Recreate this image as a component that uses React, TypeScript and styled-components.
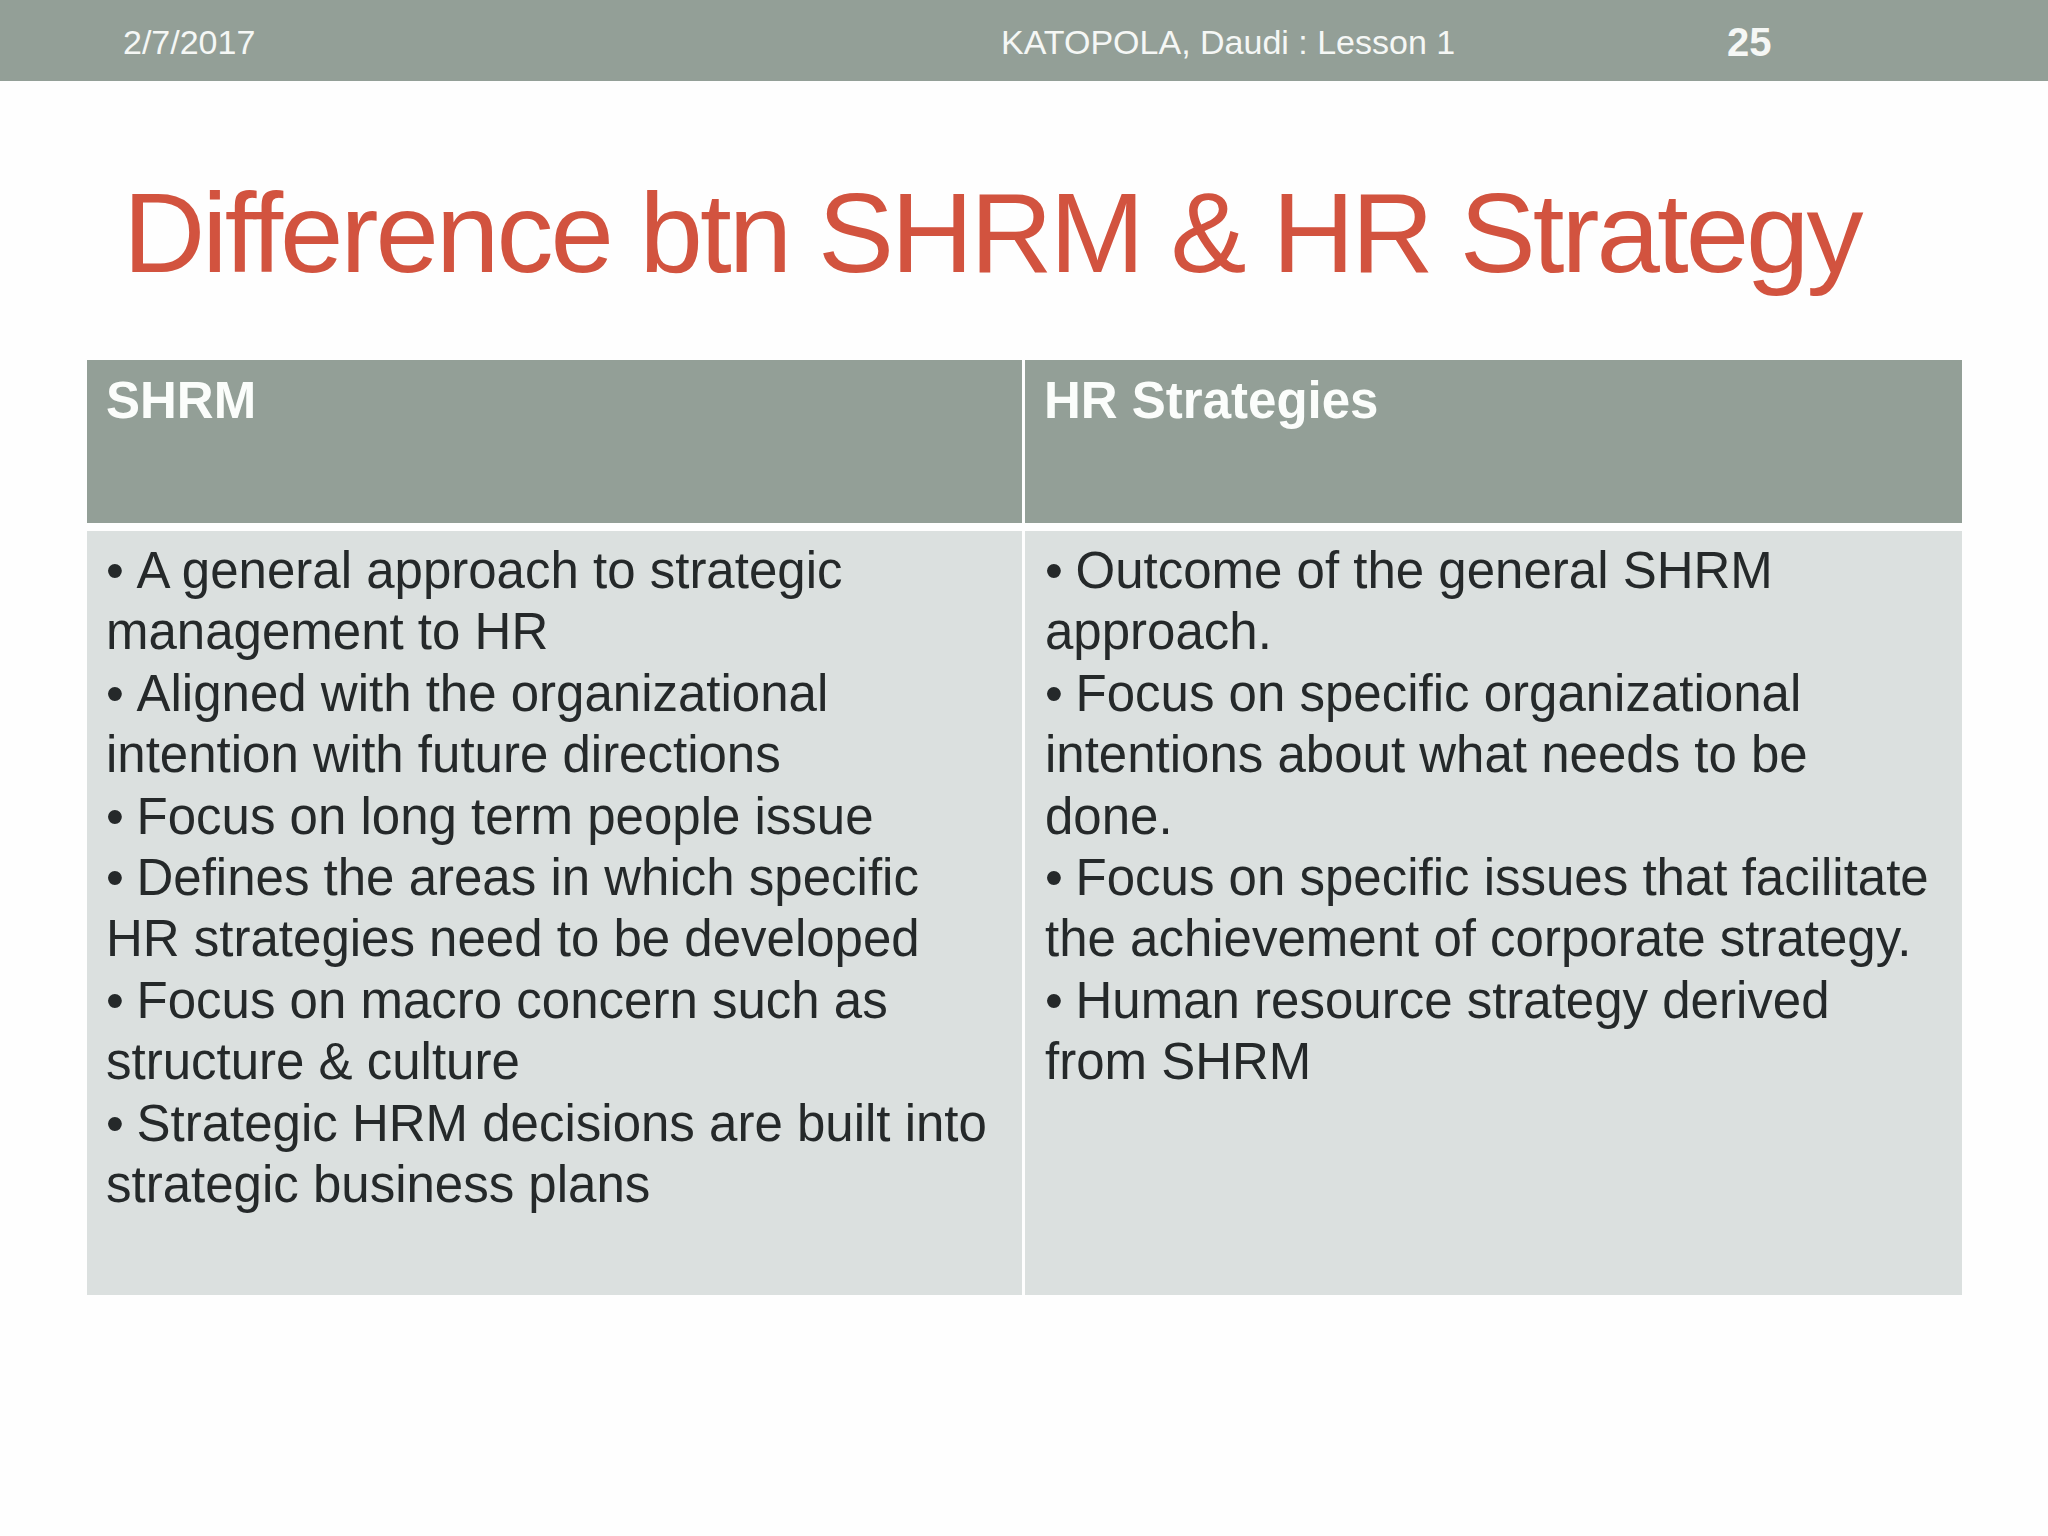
import React from "react";
import styled, { createGlobalStyle } from "styled-components";

const GlobalStyle = createGlobalStyle`
  html, body {
    margin: 0;
    padding: 0;
    background: #fefefe;
  }
  body {
    font-family: "Liberation Sans", Arial, Helvetica, sans-serif;
  }
`;

const Slide = styled.div`
  width: 2048px;
  height: 1536px;
  background: #fefefe;
  display: flex;
  flex-direction: column;
  overflow: hidden;
`;

const TopBar = styled.header`
  height: 81px;
  flex: 0 0 81px;
  background: #939f97;
  display: flex;
  align-items: flex-start;
  padding-left: 123px;
  box-sizing: border-box;
`;

const BarItem = styled.span<{ $w?: number; $top: number; $size: number; $bold?: boolean }>`
  ${(p) => (p.$w ? `width: ${p.$w}px; flex: 0 0 ${p.$w}px;` : "")}
  padding-top: ${(p) => p.$top}px;
  font-size: ${(p) => p.$size}px;
  line-height: 1;
  font-weight: ${(p) => (p.$bold ? 700 : 400)};
  color: #f5f7f5;
  white-space: nowrap;
`;

const Title = styled.h1`
  margin: 95px 0 0 123px;
  font-size: 114px;
  line-height: 114px;
  font-weight: 400;
  letter-spacing: -2.96px;
  color: #d2533f;
  white-space: nowrap;
`;

const Table = styled.div`
  margin: 70px 0 0 87px;
  display: grid;
  grid-template-columns: 935px 937px;
  grid-template-rows: 163px 764px;
  column-gap: 3px;
  row-gap: 8px;
`;

const HeaderCell = styled.div`
  background: #939f97;
  padding: 10px 19px;
  font-size: 51px;
  line-height: 61.4px;
  font-weight: 700;
  color: #fbfdfb;
`;

const BodyCell = styled.div<{ $inset: number }>`
  background: #dbe0df;
  padding: 9px 19px 9px ${(p) => p.$inset}px;
  font-size: 51px;
  line-height: 61.4px;
  color: #25292a;
`;

const Item = styled.p`
  margin: 0;
`;

const Mark = styled.span`
  display: inline-block;
  width: 30.5px;
`;

const left = [
  "A general approach to strategic management to HR",
  "Aligned with the organizational intention with future directions",
  "Focus on long term people issue",
  "Defines the areas in which specific HR strategies need to be developed",
  "Focus on macro concern such as structure & culture",
  "Strategic HRM decisions are built into strategic business plans",
];

const right = [
  "Outcome of the general SHRM approach.",
  "Focus on specific organizational intentions about what needs to be done.",
  "Focus on specific issues that facilitate the achievement of corporate strategy.",
  "Human resource strategy derived from SHRM",
];

export default function App() {
  return (
    <>
      <GlobalStyle />
      <Slide>
        <TopBar>
          <BarItem $w={878} $top={25} $size={34}>2/7/2017</BarItem>
          <BarItem $w={726} $top={25} $size={34}>KATOPOLA, Daudi : Lesson 1</BarItem>
          <BarItem $top={22} $size={40} $bold>25</BarItem>
        </TopBar>
        <Title>Difference btn SHRM &amp; HR Strategy</Title>
        <Table>
          <HeaderCell>SHRM</HeaderCell>
          <HeaderCell>HR Strategies</HeaderCell>
          <BodyCell $inset={19}>
            {left.map((t) => (
              <Item key={t}>
                <Mark>•</Mark>
                {t}
              </Item>
            ))}
          </BodyCell>
          <BodyCell $inset={20}>
            {right.map((t) => (
              <Item key={t}>
                <Mark>•</Mark>
                {t}
              </Item>
            ))}
          </BodyCell>
        </Table>
      </Slide>
    </>
  );
}
